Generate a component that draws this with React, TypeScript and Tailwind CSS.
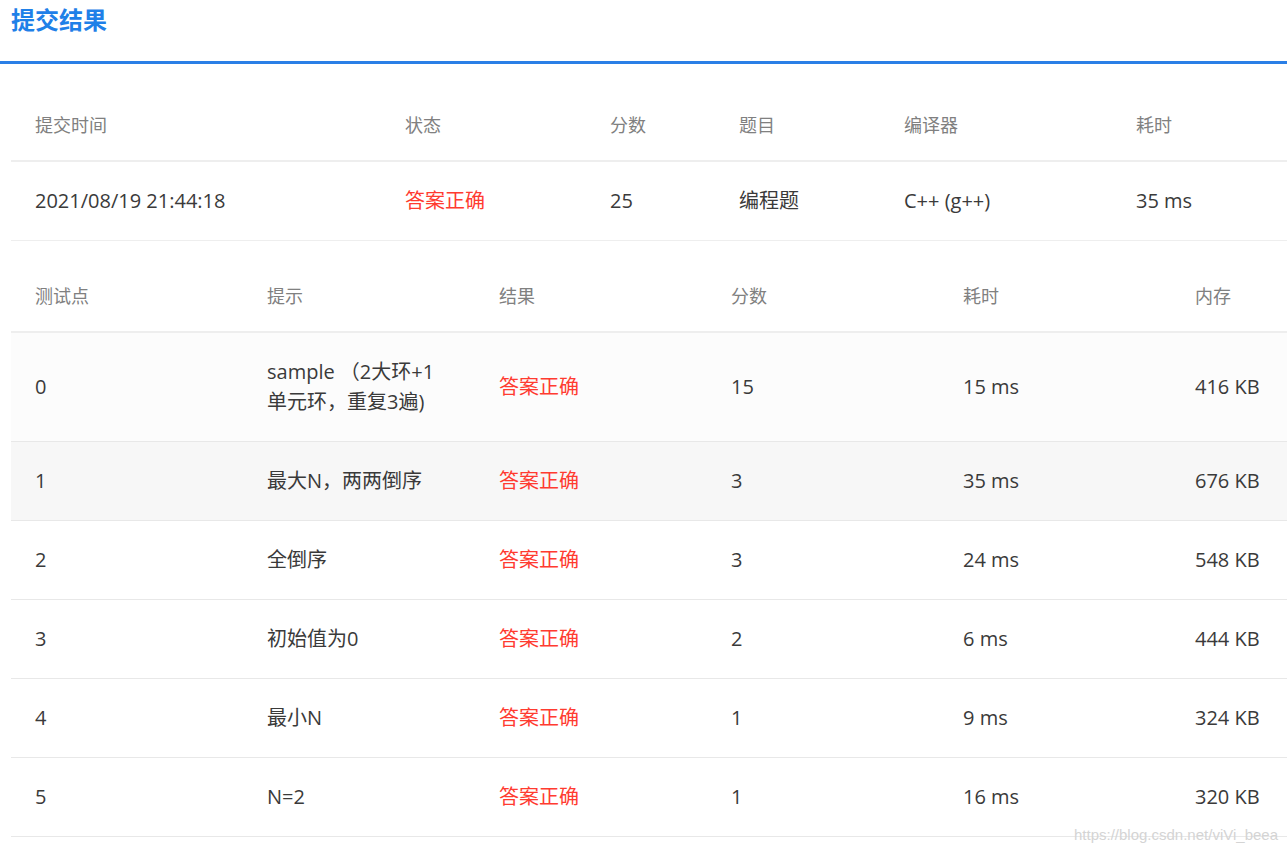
const summaryCols = [
  { title: "提交时间", w: "w-[370px]" },
  { title: "状态", w: "w-[205px]" },
  { title: "分数", w: "w-[129px]" },
  { title: "题目", w: "w-[165px]" },
  { title: "编译器", w: "w-[232px]" },
  { title: "耗时", w: "w-[232px]" },
];

const caseCols = ["测试点", "提示", "结果", "分数", "耗时", "内存"];

const cases = [
  { id: "0", hint: "sample （2大环+1单元环，重复3遍)", score: "15", time: "15 ms", mem: "416 KB" },
  { id: "1", hint: "最大N，两两倒序", score: "3", time: "35 ms", mem: "676 KB" },
  { id: "2", hint: "全倒序", score: "3", time: "24 ms", mem: "548 KB" },
  { id: "3", hint: "初始值为0", score: "2", time: "6 ms", mem: "444 KB" },
  { id: "4", hint: "最小N", score: "1", time: "9 ms", mem: "324 KB" },
  { id: "5", hint: "N=2", score: "1", time: "16 ms", mem: "320 KB" },
];

const font = { fontFamily: '"Open Sans", "Noto Sans CJK SC", sans-serif' };

const App = () => {
  return (
    <div className="relative w-[1287px] h-[854px] overflow-hidden bg-white text-[#3a3a3a]" style={font}>
      <div className="h-[64px] px-[11px] border-b-[3px] border-[#2a7fe6]">
        <h1 className="pt-[6px] text-[24px] leading-[28px] font-bold text-[#1f80e8]">提交结果</h1>
      </div>

      <div className="pl-[11px] pt-[26px]">
        <table className="table-fixed border-collapse w-[1333px]">
          <thead>
            <tr className="border-b-2 border-[#eeeeee]">
              {summaryCols.map((c) => (
                <th key={c.title} className={`${c.w} px-6 py-6 text-left font-normal text-[18px] leading-[22px] text-[#808080]`}>
                  {c.title}
                </th>
              ))}
            </tr>
          </thead>
          <tbody>
            <tr className="border-b border-[#eeeeee] text-[20px] leading-[30px]">
              <td className="px-6 py-6">2021/08/19 21:44:18</td>
              <td className="px-6 py-6 text-[#ff3b30]">答案正确</td>
              <td className="px-6 py-6">25</td>
              <td className="px-6 py-6">编程题</td>
              <td className="px-6 py-6">C++ (g++)</td>
              <td className="px-6 py-6">35 ms</td>
            </tr>
          </tbody>
        </table>

        <table className="table-fixed border-collapse w-[1392px] mt-[20px]">
          <thead>
            <tr className="border-b-2 border-[#eeeeee]">
              {caseCols.map((c) => (
                <th key={c} className="w-[232px] px-6 py-6 text-left font-normal text-[18px] leading-[22px] text-[#808080]">
                  {c}
                </th>
              ))}
            </tr>
          </thead>
          <tbody>
            {cases.map((r, i) => (
              <tr
                key={r.id}
                className={`border-b border-[#e8e8e8] text-[20px] leading-[30px] ${i === 0 ? "bg-[#fcfcfc]" : i === 1 ? "bg-[#f7f7f7]" : "bg-white"}`}
              >
                <td className="px-6 py-6">{r.id}</td>
                <td className="px-6 py-6 break-all">{r.hint}</td>
                <td className="px-6 py-6 text-[#ff3b30]">答案正确</td>
                <td className="px-6 py-6">{r.score}</td>
                <td className="px-6 py-6">{r.time}</td>
                <td className="px-6 py-6">{r.mem}</td>
              </tr>
            ))}
          </tbody>
        </table>
      </div>

      <div className="absolute right-[9px] top-[825px] text-[15px] leading-[20px] text-[#d4d4d4]" style={{ fontFamily: '"Liberation Sans", sans-serif' }}>
        https://blog.csdn.net/viVi_beea
      </div>
    </div>
  );
};

export default App;
